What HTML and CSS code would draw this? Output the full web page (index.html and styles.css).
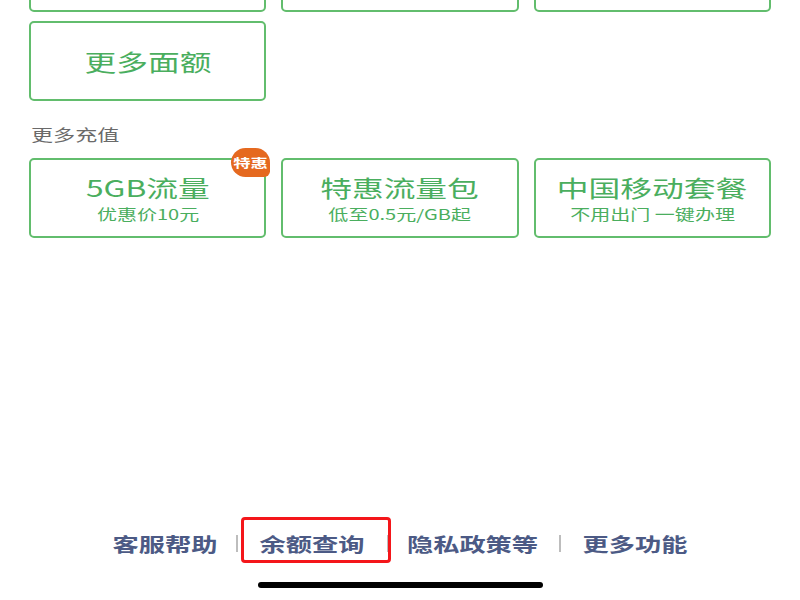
FILE: index.html
```html
<!DOCTYPE html>
<html lang="zh-CN">

<head>
  <meta charset="UTF-8">
  <meta name="viewport" content="width=device-width, initial-scale=1.0">
  <title>充值</title>

  <link rel="stylesheet" href="styles.css">
</head>

<body>
  <div class="page">
    <!-- 面额（第一行已滚出屏幕） -->
    <div class="grid grid-top">
      <div class="card"></div>
      <div class="card"></div>
      <div class="card"></div>
      <div class="card"><span class="txt big">更多面额</span></div>
    </div>

    <div class="label"><span class="txt">更多充值</span></div>

    <!-- 更多充值 -->
    <div class="grid">
      <div class="card card-two">
        <span class="badge"><span class="txt">特惠</span></span>
        <span class="txt title">5GB流量</span>
        <span class="txt sub">优惠价10元</span>
      </div>
      <div class="card card-two">
        <span class="txt title">特惠流量包</span>
        <span class="txt sub">低至0.5元/GB起</span>
      </div>
      <div class="card card-two">
        <span class="txt title">中国移动套餐</span>
        <span class="txt sub">不用出门 一键办理</span>
      </div>
    </div>

    <ul class="nav">
      <li><span class="txt">客服帮助</span></li>
      <li class="sep sep-first"></li>
      <li class="mark"><span class="txt">余额查询</span></li>
      <li class="sep"></li>
      <li><span class="txt">隐私政策等</span></li>
      <li class="sep sep-last"></li>
      <li><span class="txt">更多功能</span></li>
    </ul>

    <div class="home-bar"></div>
  </div>
</body>

</html>
```

FILE: styles.css
```css
* {
  margin: 0;
  padding: 0;
  box-sizing: border-box;
}

body {
  background: #fff;
  font-family: "Noto Sans CJK SC", "Noto Sans", sans-serif;
}

.page {
  height: 600px;
  overflow: hidden;
  display: flex;
  flex-direction: column;
  padding: 0 29px;
}

/* 截图是横向拉伸的，文字单独拉宽 */
.txt {
  display: inline-block;
  transform: scaleX(1.38);
  transform-origin: center;
  white-space: nowrap;
}

.grid {
  display: grid;
  grid-template-columns: repeat(3, 1fr);
  column-gap: 15px;
  row-gap: 9px;
}

.grid-top {
  margin-top: -68px;
}

.card {
  height: 80px;
  border: 2px solid #62bd6d;
  border-radius: 5px;
  display: flex;
  flex-direction: column;
  align-items: center;
  justify-content: center;
  color: #4aae5e;
  position: relative;
}

.big {
  font-size: 23px;
  line-height: 30px;
}

.label {
  margin-top: 22px;
  padding-left: 2px;
  font-size: 16px;
  line-height: 22px;
  color: #6a6a6a;
  margin-bottom: 13px;
}

.label .txt {
  transform-origin: left;
}

.title {
  font-size: 23px;
  line-height: 28px;
}

.sub {
  font-size: 14.5px;
  line-height: 20px;
  margin-top: 3px;
}

.badge {
  position: absolute;
  top: -12px;
  right: -6px;
  width: 39px;
  height: 29px;
  background: #e5691f;
  border-radius: 15px 15px 6px 15px;
  color: #fff;
  font-size: 12.5px;
  font-weight: 700;
  line-height: 29px;
  text-align: center;
}

.nav {
  margin-top: auto;
  list-style: none;
  display: flex;
  justify-content: center;
  align-items: center;
  gap: 36px;
  height: 40px;
  font-size: 19px;
  font-weight: 700;
  color: #4c5a85;
}

.nav .sep {
  width: 2px;
  height: 17px;
  background: #bdbdbd;
}

.nav .sep-first {
  margin-left: -3px;
}

.nav .sep-last {
  margin-left: 3px;
}

.mark {
  position: relative;
}

/* 红框标注 */
.mark::after {
  content: '';
  position: absolute;
  top: -13px;
  bottom: -6px;
  left: -33px;
  right: -40px;
  border: 3px solid #f4161a;
  border-radius: 4px;
}

.home-bar {
  width: 285px;
  height: 6px;
  margin: 19px auto 12px;
  background: #000;
  border-radius: 3px;
}
```
